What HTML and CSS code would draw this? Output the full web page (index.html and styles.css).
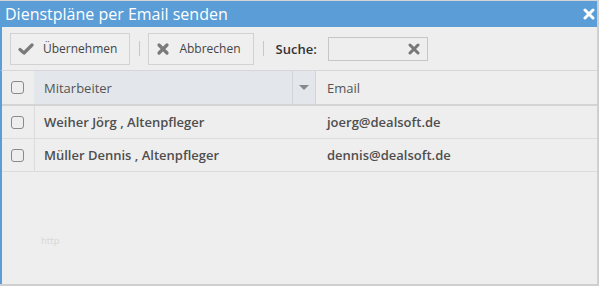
FILE: index.html
```html
<!DOCTYPE html>
<html lang="de">
<head>
    <meta charset="UTF-8">
    <title>Dienstpläne per Email senden</title>
    <link rel="stylesheet" href="styles.css">
</head>
<body>
    <div class="dialog">
        <div class="dialog-title">
            <span>Dienstpläne per Email senden</span>
            <svg class="close-icon" width="12" height="12" viewBox="0 0 12 12">
                <path d="M2 2 L10 10 M10 2 L2 10" stroke="#fff" stroke-width="3" stroke-linecap="round"/>
            </svg>
        </div>
        <div class="toolbar">
            <button class="tool-button">
                <svg width="16" height="14" viewBox="0 0 16 14">
                    <path d="M2 7.5 L6 11 L14 3" stroke="#7a7a7a" stroke-width="3.2" fill="none" stroke-linecap="round" stroke-linejoin="round"/>
                </svg>
                Übernehmen
            </button>
            <span class="separator"></span>
            <button class="tool-button">
                <svg width="14" height="14" viewBox="0 0 14 14">
                    <path d="M3 3 L11 11 M11 3 L3 11" stroke="#7a7a7a" stroke-width="3.2" stroke-linecap="round"/>
                </svg>
                Abbrechen
            </button>
            <span class="separator"></span>
            <label class="search-label">Suche:</label>
            <div class="search-box">
                <svg width="12" height="12" viewBox="0 0 12 12">
                    <path d="M2 2 L10 10 M10 2 L2 10" stroke="#777" stroke-width="3" stroke-linecap="round"/>
                </svg>
            </div>
        </div>
        <div class="grid">
            <div class="grid-row grid-head">
                <div class="cell-check"><span class="checkbox"></span></div>
                <div class="cell-name head-active">
                    <span class="head-text">Mitarbeiter</span>
                    <span class="head-menu"><span class="arrow"></span></span>
                </div>
                <div class="cell-mail"><span class="head-text">Email</span></div>
            </div>
            <div class="grid-row">
                <div class="cell-check"><span class="checkbox"></span></div>
                <div class="cell-name">Weiher Jörg , Altenpfleger</div>
                <div class="cell-mail">joerg@dealsoft.de</div>
            </div>
            <div class="grid-row">
                <div class="cell-check"><span class="checkbox"></span></div>
                <div class="cell-name">Müller Dennis , Altenpfleger</div>
                <div class="cell-mail">dennis@dealsoft.de</div>
            </div>
            <div class="grid-empty">
                <span class="faint">http</span>
            </div>
        </div>
    </div>
</body>
</html>
```
FILE: styles.css
```css
body {
    margin: 0;
    font-family: "Open Sans", Arial, sans-serif;
    background-color: #eeeeee;
}
.dialog {
    width: 599px;
    height: 286px;
    box-sizing: border-box;
    border-top: 1px solid #d4d4d4;
    border-right: 2px solid #cfcfcf;
    border-bottom: 2px solid #cfcfcf;
    background-color: #eeeeee;
    display: flex;
    flex-direction: column;
}
.dialog-title {
    height: 26px;
    background-color: #5b9dd6;
    color: #fff;
    font-size: 16px;
    display: flex;
    align-items: center;
    justify-content: space-between;
    padding: 0 2px 0 5px;
    flex-shrink: 0;
}
.dialog-title span {
    line-height: 26px;
}
.toolbar {
    display: flex;
    align-items: center;
    height: 43px;
    padding-left: 10px;
    border-left: 2px solid #5b9dd6;
    box-sizing: border-box;
    flex-shrink: 0;
}
.tool-button {
    display: flex;
    align-items: center;
    gap: 9px;
    height: 32px;
    padding: 0 12px 0 7px;
    border: 1px solid #d2d2d2;
    background-color: #efefef;
    font-family: "Open Sans", Arial, sans-serif;
    font-size: 12px;
    color: #444;
}
.tool-button:first-child {
    margin-left: -2px;
}
.separator {
    width: 1px;
    height: 15px;
    background-color: #c8c8c8;
    margin: 0 8px 0 9px;
}
.search-label {
    font-size: 13px;
    font-weight: 600;
    color: #333;
    margin-left: 4px;
    margin-right: 11px;
}
.search-box {
    width: 100px;
    height: 24px;
    box-sizing: border-box;
    border: 1px solid #c6c6c6;
    display: flex;
    align-items: center;
    justify-content: flex-end;
    padding-right: 7px;
}
.grid {
    flex: 1;
    display: flex;
    flex-direction: column;
    border-left: 2px solid #5b9dd6;
    border-top: 1px solid #d6d6d6;
}
.grid-row {
    display: flex;
    height: 32px;
    flex-shrink: 0;
    border-bottom: 1px solid #dcdcdc;
    font-size: 13px;
    font-weight: 600;
    color: #4e4e4e;
}
.grid-head {
    height: 33px;
    border-bottom: 2px solid #d4d4d4;
    font-weight: 400;
}
.cell-check {
    width: 31px;
    border-right: 1px solid #dcdcdc;
    display: flex;
    align-items: center;
    justify-content: center;
    padding-right: 1px;
}
.grid-head .cell-check {
    border-right: none;
}
.checkbox {
    width: 11px;
    height: 11px;
    border: 1px solid #8a8a8a;
    border-radius: 3px;
}
.cell-name {
    width: 272px;
    padding-left: 9px;
    display: flex;
    align-items: center;
}
.cell-mail {
    flex: 1;
    padding-left: 11px;
    display: flex;
    align-items: center;
}
.head-active {
    background-color: #e3e7eb;
    padding-left: 10px;
    width: 271px;
    justify-content: space-between;
    border-right: 1px solid #d4d4d4;
}
.head-text {
    color: #555;
}
.head-menu {
    width: 22px;
    height: 100%;
    border-left: 1px solid #d4d4d4;
    display: flex;
    align-items: center;
    justify-content: center;
}
.arrow {
    width: 0;
    height: 0;
    border-left: 5px solid transparent;
    border-right: 5px solid transparent;
    border-top: 5px solid #888;
}
.grid-empty {
    flex: 1;
    padding: 55px 0 0 39px;
}
.faint {
    font-family: "DejaVu Sans", sans-serif;
    font-size: 9px;
    color: #d8d8d8;
}
```
